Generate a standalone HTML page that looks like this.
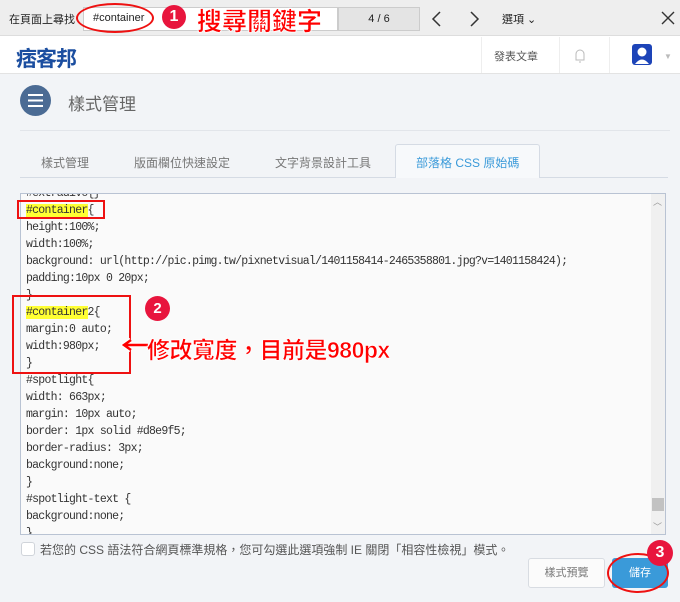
<!DOCTYPE html>
<html><head><meta charset="utf-8"><style>
*{margin:0;padding:0;box-sizing:border-box}
body{width:680px;height:602px;overflow:hidden;background:#f2f4f7;font-family:"Liberation Sans","Noto Sans CJK TC",sans-serif;position:relative}
.a{position:absolute}
.find{left:0;top:0;width:680px;height:36px;background:#eeeeee;border-bottom:1px solid #ddd}
.hdr{left:0;top:36px;width:680px;height:38px;background:#fff;border-bottom:1px solid #e3e3e3}
.code{left:20px;top:193px;width:646px;height:342px;background:#fafafa;border:1px solid #b9c3d3;overflow:hidden}
.code pre{font-family:"Liberation Mono",monospace;font-size:11.5px;letter-spacing:-0.75px;line-height:17px;color:#333;position:absolute;left:5px;top:-9px}
.hl{background:#ffff33}
.red{color:#f00;font-weight:bold;-webkit-text-stroke:0.6px #fff;text-shadow:0 0 2px #fff,0 0 2px #fff}
.circ{border-radius:50%;background:#e8153d;color:#fff;text-align:center;font-weight:bold}
</style></head><body>
<div class="a find"></div>
<div class="a" style="left:9px;top:11px;font-size:11px;color:#222">在頁面上尋找</div>
<div class="a" style="left:83px;top:7px;width:255px;height:24px;background:#fff;border:1px solid #ccc"></div>
<div class="a" style="left:338px;top:7px;width:82px;height:24px;background:#e4e4e4;border:1px solid #ccc;font-size:11px;text-align:center;line-height:22px;color:#222">4 / 6</div>
<div class="a" style="left:93px;top:12px;font-size:11px;color:#222">#container</div>
<div class="a" style="left:76px;top:3px;width:78px;height:30px;border:2px solid #e11;border-radius:50%"></div>
<div class="a circ" style="left:162px;top:5px;width:24px;height:24px;line-height:24px;font-size:16px">1</div>
<div class="a red" style="left:197px;top:2px;font-size:25px">搜尋關鍵字</div>
<svg class="a" style="left:428px;top:10px" width="60" height="18"><path d="M12 2 L5 9 L12 16 M43 2 L50 9 L43 16" fill="none" stroke="#333" stroke-width="1.5"/></svg>
<div class="a" style="left:502px;top:11px;font-size:11px;color:#222">選項 ⌄</div>
<svg class="a" style="left:660px;top:10px" width="16" height="16"><path d="M2 2L14 14M14 2L2 14" stroke="#333" stroke-width="1.4"/></svg>
<div class="a hdr"></div>
<div class="a" style="left:16px;top:43px;font-size:21px;font-weight:bold;color:#1b4ea0;letter-spacing:-1px">痞客邦</div>
<div class="a" style="left:481px;top:37px;width:1px;height:36px;background:#eee"></div>
<div class="a" style="left:559px;top:37px;width:1px;height:36px;background:#eee"></div>
<div class="a" style="left:609px;top:37px;width:1px;height:36px;background:#eee"></div>
<div class="a" style="left:494px;top:48px;font-size:11px;color:#555">發表文章</div>
<svg class="a" style="left:574px;top:48px" width="12" height="16"><path d="M2 12 L2 6 A4 4 0 0 1 10 6 L10 12 Z M5 14 L7 14" fill="none" stroke="#bbb"/></svg>
<svg class="a" style="left:631px;top:43px" width="24" height="26"><rect x="1" y="1" width="20" height="21" rx="3" fill="#1d44b8"/><circle cx="11" cy="9" r="4.5" fill="#fff"/><path d="M4 21 Q11 12 18 21Z" fill="#fff"/></svg>
<div class="a" style="left:664px;top:52px;font-size:8px;color:#bbb">▼</div>
<div class="a" style="left:20px;top:85px;width:31px;height:31px;border-radius:50%;background:#4b6b94"></div>
<svg class="a" style="left:27px;top:93px" width="17" height="15"><path d="M1 2H16M1 7.5H16M1 13H16" stroke="#fff" stroke-width="2"/></svg>
<div class="a" style="left:68px;top:90px;font-size:17px;color:#666">樣式管理</div>
<div class="a" style="left:20px;top:130px;width:650px;height:1px;background:#e2e5ea"></div>
<div class="a" style="left:20px;top:177px;width:648px;height:1px;background:#d5dbe4"></div>
<div class="a" style="left:395px;top:144px;width:145px;height:34px;background:#f7f9fb;border:1px solid #d5dbe4;border-bottom:none;border-radius:3px 3px 0 0"></div>
<div class="a" style="left:41px;top:154px;font-size:12px;color:#777">樣式管理</div>
<div class="a" style="left:134px;top:154px;font-size:12px;color:#777">版面欄位快速設定</div>
<div class="a" style="left:275px;top:154px;font-size:12px;color:#777">文字背景設計工具</div>
<div class="a" style="left:416px;top:154px;font-size:12px;color:#3a9ad9">部落格 CSS 原始碼</div>
<div class="a code"><pre>#extradivo{}
<span class="hl">#container</span>{
height:100%;
width:100%;
background: url(http://pic.pimg.tw/pixnetvisual/1401158414-2465358801.jpg?v=1401158424);
padding:10px 0 20px;
}
<span class="hl">#container</span>2{
margin:0 auto;
width:980px;
}
#spotlight{
width: 663px;
margin: 10px auto;
border: 1px solid #d8e9f5;
border-radius: 3px;
background:none;
}
#spotlight-text {
background:none;
}</pre>
<div class="a" style="right:0;top:0;width:14px;height:340px;background:#f0f0f0"></div>
<div class="a" style="right:1px;top:304px;width:12px;height:13px;background:#c2c2c2"></div>
<div class="a" style="right:3px;top:1px;font-size:9px;color:#999">︿</div>
<div class="a" style="right:3px;top:326px;font-size:9px;color:#999">﹀</div>
</div>
<div class="a" style="left:17px;top:200px;width:88px;height:19px;border:2px solid #e11"></div>
<div class="a" style="left:12px;top:295px;width:119px;height:79px;border:2px solid #e11"></div>
<div class="a circ" style="left:145px;top:296px;width:25px;height:25px;line-height:25px;font-size:15px">2</div>
<svg class="a" style="left:121px;top:338px" width="28" height="14"><path d="M27 7H4M10 2L3 7L10 12" fill="none" stroke="#fff" stroke-width="5"/><path d="M27 7H4M10 2L3 7L10 12" fill="none" stroke="#f00" stroke-width="2.5"/></svg>
<div class="a red" style="left:147px;top:331px;font-size:23px;letter-spacing:-0.5px">修改寬度，目前是980px</div>
<div class="a" style="left:21px;top:542px;width:14px;height:14px;background:#fff;border:1px solid #d0d4da;border-radius:3px"></div>
<div class="a" style="left:40px;top:541px;font-size:12px;color:#555">若您的 CSS 語法符合網頁標準規格，您可勾選此選項強制 IE 關閉「相容性檢視」模式。</div>
<div class="a" style="left:528px;top:558px;width:77px;height:30px;background:#fbfbfb;border:1px solid #d8dce2;border-radius:3px;font-size:11px;color:#777;text-align:center;line-height:28px">樣式預覽</div>
<div class="a" style="left:612px;top:558px;width:56px;height:30px;background:#3a9ad9;border-radius:3px;font-size:11px;color:#fff;text-align:center;line-height:30px">儲存</div>
<div class="a" style="left:607px;top:553px;width:62px;height:40px;border:2px solid #e11;border-radius:50%"></div>
<div class="a circ" style="left:647px;top:540px;width:26px;height:26px;line-height:26px;font-size:16px">3</div>
</body></html>
